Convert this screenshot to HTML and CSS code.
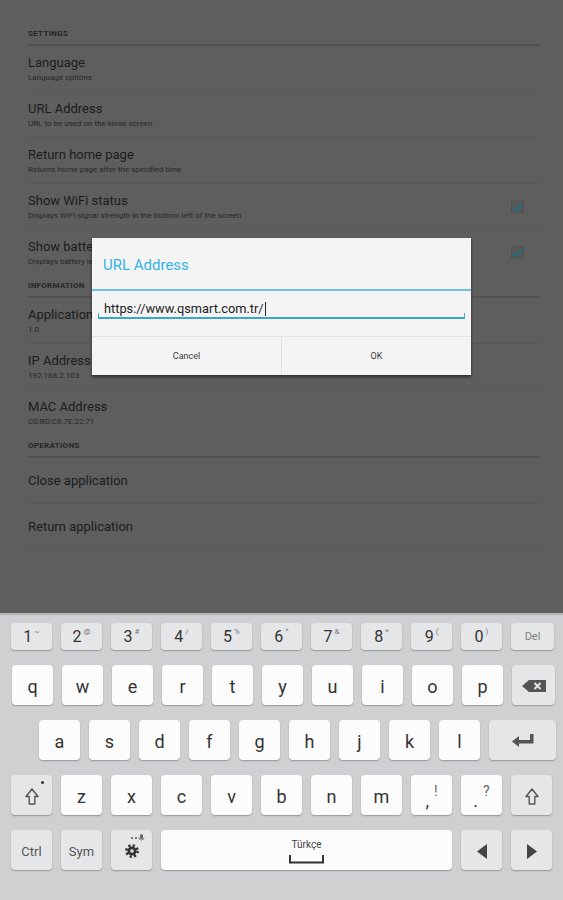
FILE: index.html
```html
<!DOCTYPE html>
<html lang="en">
<head>
  <meta charset="UTF-8">
  <meta name="viewport" content="width=device-width, initial-scale=1.0">
  <title>Kiosk Settings - URL Address</title>
  <link rel="stylesheet" href="styles.css">
</head>
<body>
<div class="screen">

  <div class="settings">
    <div class="group-title">SETTINGS</div>
    <div class="pref">
      <div class="pref-text"><div class="pref-title">Language</div><div class="pref-sub">Language options</div></div>
    </div>
    <div class="pref">
      <div class="pref-text"><div class="pref-title">URL Address</div><div class="pref-sub">URL to be used on the kiosk screen</div></div>
    </div>
    <div class="pref">
      <div class="pref-text"><div class="pref-title">Return home page</div><div class="pref-sub">Returns home page after the specified time</div></div>
    </div>
    <div class="pref">
      <div class="pref-text"><div class="pref-title">Show WiFi status</div><div class="pref-sub">Displays WiFi signal strength in the bottom left of the screen</div></div>
      <span class="check"><svg width="12" height="10" viewBox="0 0 12 10"><path d="M1 5.5l3.2 3L11 1.5" fill="none" stroke="#1d6e86" stroke-width="2.2"/></svg></span>
    </div>
    <div class="pref last">
      <div class="pref-text"><div class="pref-title">Show battery status</div><div class="pref-sub">Displays battery level in the bottom left of the screen</div></div>
      <span class="check"><svg width="12" height="10" viewBox="0 0 12 10"><path d="M1 5.5l3.2 3L11 1.5" fill="none" stroke="#1d6e86" stroke-width="2.2"/></svg></span>
    </div>

    <div class="group-title">INFORMATION</div>
    <div class="pref">
      <div class="pref-text"><div class="pref-title">Application version</div><div class="pref-sub">1.0</div></div>
    </div>
    <div class="pref">
      <div class="pref-text"><div class="pref-title">IP Address</div><div class="pref-sub">192.168.2.103</div></div>
    </div>
    <div class="pref last">
      <div class="pref-text"><div class="pref-title">MAC Address</div><div class="pref-sub">C0:BD:C8:7E:22:71</div></div>
    </div>

    <div class="group-title">OPERATIONS</div>
    <div class="pref">
      <div class="pref-text"><div class="pref-title">Close application</div></div>
    </div>
    <div class="pref">
      <div class="pref-text"><div class="pref-title">Return application</div></div>
    </div>
  </div>

  <div class="dialog">
    <div class="dialog-title">URL Address</div>
    <div class="dialog-body">
      <div class="edit">https://www.qsmart.com.tr/<span class="cursor"></span></div>
    </div>
    <div class="dialog-buttons">
      <div class="dbtn">Cancel</div>
      <div class="dbtn">OK</div>
    </div>
  </div>

  <div class="keyboard">
    <div class="kb-row num-row">
      <div class="key fn">1<sup>~</sup></div>
      <div class="key fn">2<sup>@</sup></div>
      <div class="key fn">3<sup>#</sup></div>
      <div class="key fn">4<sup>/</sup></div>
      <div class="key fn">5<sup>%</sup></div>
      <div class="key fn">6<sup>^</sup></div>
      <div class="key fn">7<sup>&amp;</sup></div>
      <div class="key fn">8<sup>*</sup></div>
      <div class="key fn">9<sup>(</sup></div>
      <div class="key fn">0<sup>)</sup></div>
      <div class="key fn small-label wide">Del</div>
    </div>
    <div class="kb-row row-q">
      <div class="key">q</div><div class="key">w</div><div class="key">e</div><div class="key">r</div><div class="key">t</div>
      <div class="key">y</div><div class="key">u</div><div class="key">i</div><div class="key">o</div><div class="key">p</div>
      <div class="key fn wide">
        <svg width="24" height="12" viewBox="0 0 24 12"><path d="M7 0h17v12H7L0 6z" fill="#555"/><path d="M12.5 3l6 6M18.5 3l-6 6" stroke="#e5e6e8" stroke-width="2"/></svg>
      </div>
    </div>
    <div class="kb-row row-a">
      <div class="key">a</div><div class="key">s</div><div class="key">d</div><div class="key">f</div><div class="key">g</div>
      <div class="key">h</div><div class="key">j</div><div class="key">k</div><div class="key">l</div>
      <div class="key fn enter">
        <svg width="22" height="14" viewBox="0 0 22 14"><path d="M18 0h3.5v9.5H7v3.5L0 7.5 7 2v4h11z" fill="#555"/></svg>
      </div>
    </div>
    <div class="kb-row">
      <div class="key fn shift">
        <svg width="14" height="17" viewBox="0 0 14 17"><path d="M7 1l6 7.5H9.8V16H4.2V8.5H1z" fill="none" stroke="#555" stroke-width="1.4" stroke-linejoin="round"/></svg>
        <span class="lock-dot"></span>
      </div>
      <div class="key">z</div><div class="key">x</div><div class="key">c</div><div class="key">v</div><div class="key">b</div>
      <div class="key">n</div><div class="key">m</div>
      <div class="key punct"><span class="mark">,</span><sup>!</sup></div>
      <div class="key punct"><span class="mark">.</span><sup>?</sup></div>
      <div class="key fn">
        <svg width="14" height="17" viewBox="0 0 14 17"><path d="M7 1l6 7.5H9.8V16H4.2V8.5H1z" fill="none" stroke="#555" stroke-width="1.4" stroke-linejoin="round"/></svg>
      </div>
    </div>
    <div class="kb-row">
      <div class="key fn label">Ctrl</div>
      <div class="key fn label">Sym</div>
      <div class="key fn gear">
        <svg width="16" height="16" viewBox="0 0 16 16">
          <circle cx="8" cy="8" r="5.6" fill="none" stroke="#333" stroke-width="2.6" stroke-dasharray="2.2 2.2"/>
          <circle cx="8" cy="8" r="4.6" fill="#333"/>
          <circle cx="8" cy="8" r="1.8" fill="#e5e6e8"/>
        </svg>
        <span class="gear-dots">
          <svg width="16" height="8" viewBox="0 0 16 8"><circle cx="2" cy="5" r="1" fill="#555"/><circle cx="6" cy="5" r="1" fill="#555"/><rect x="10" y="1" width="3" height="5" rx="1.5" fill="#666"/><path d="M9 4.5a2.5 2.5 0 0 0 5 0" fill="none" stroke="#666" stroke-width=".8"/></svg>
        </span>
      </div>
      <div class="key space">
        <span class="lang">Türkçe</span>
        <svg width="35" height="9" viewBox="0 0 35 9"><path d="M1 0v7.5h33V0" fill="none" stroke="#333" stroke-width="2"/></svg>
      </div>
      <div class="key fn">
        <svg width="10" height="15" viewBox="0 0 10 15"><path d="M10 0v15L0 7.5z" fill="#444"/></svg>
      </div>
      <div class="key fn">
        <svg width="10" height="15" viewBox="0 0 10 15"><path d="M0 0v15l10-7.5z" fill="#444"/></svg>
      </div>
    </div>
  </div>

</div>
</body>
</html>
```

FILE: styles.css
```css
* {
  box-sizing: border-box;
}
body {
  margin: 0;
  font-family: Roboto, "Liberation Sans", sans-serif;
  background: #5e5e5e;
}
.screen {
  position: relative;
  width: 563px;
  height: 900px;
  overflow: hidden;
}

/* settings list, dimmed behind the dialog */
.settings {
  height: 613px;
  background: #5e5e5e;
  padding: 24px 23px 0 27px;
}
.group-title {
  height: 22px;
  line-height: 20px;
  padding-left: 1px;
  font-size: 8px;
  font-weight: bold;
  letter-spacing: 0.3px;
  color: #262626;
  border-bottom: 2px solid #515151;
}
.pref {
  display: flex;
  align-items: center;
  justify-content: space-between;
  height: 46px;
  padding-left: 1px;
  border-bottom: 1px solid #585858;
}
.pref.last {
  border-bottom-color: transparent;
}
.pref-title {
  font-size: 13px;
  line-height: 16px;
  color: #1c1c1c;
}
.pref-sub {
  margin-top: 2px;
  font-size: 8px;
  line-height: 10px;
  color: #272727;
}
.check {
  display: flex;
  align-items: center;
  justify-content: center;
  width: 13px;
  height: 13px;
  margin-right: 16px;
  background: #575757;
  border: 1px solid #535353;
}

/* dialog */
.dialog {
  position: absolute;
  left: 92px;
  top: 238px;
  width: 379px;
  height: 137px;
  background: #f4f4f4;
  box-shadow: 0 2px 3px rgba(0, 0, 0, 0.55);
}
.dialog-title {
  height: 53px;
  padding: 17px 0 0 11px;
  font-size: 15px;
  line-height: 20px;
  color: #33b5e5;
  border-bottom: 2px solid #6cc3e6;
}
.dialog-body {
  height: 45px;
  padding: 8px 6px 0 6px;
}
.edit {
  position: relative;
  height: 20px;
  padding-left: 6px;
  font-size: 12.8px;
  line-height: 20px;
  color: #222;
  border-bottom: 2px solid #3aa5cf;
}
.edit::before,
.edit::after {
  content: "";
  position: absolute;
  bottom: 0;
  width: 1px;
  height: 4px;
  background: #3aa5cf;
}
.edit::before {
  left: 0;
}
.edit::after {
  right: 0;
}
.cursor {
  display: inline-block;
  width: 1px;
  height: 14px;
  margin-left: 1px;
  vertical-align: -3px;
  background: #222;
}
.dialog-buttons {
  display: flex;
  height: 39px;
  border-top: 1px solid #e2e2e2;
}
.dbtn {
  flex: 1;
  display: flex;
  align-items: center;
  justify-content: center;
  font-size: 9px;
  color: #3a3a3a;
}
.dbtn + .dbtn {
  border-left: 1px solid #e2e2e2;
}

/* keyboard */
.keyboard {
  height: 287px;
  background: #cfd0d2;
  border-top: 2px solid #b4b5b7;
  padding-top: 8px;
}
.kb-row {
  display: flex;
  gap: 9px;
  padding-left: 11px;
  margin-bottom: 15px;
}
.row-q {
  padding-left: 12px;
}
.row-a {
  padding-left: 39px;
}
.key {
  position: relative;
  display: flex;
  align-items: center;
  justify-content: center;
  width: 41px;
  height: 40px;
  padding-top: 2px;
  border-radius: 4px;
  background: #fcfcfc;
  box-shadow: 0 1px 1.5px rgba(0, 0, 0, 0.28);
  font-size: 18px;
  color: #333;
}
.key.fn {
  background: #e5e6e8;
}
.num-row .key {
  height: 27px;
  padding-top: 0;
  font-size: 16px;
}
.key sup {
  align-self: flex-start;
  margin-top: 4px;
  margin-left: 2px;
  font-size: 8px;
  color: #777;
}
.key.wide {
  width: 43px;
}
.small-label {
  font-size: 11px !important;
  color: #808080;
}
.enter {
  width: 67px;
}
.lock-dot {
  position: absolute;
  top: 6px;
  right: 8px;
  width: 3px;
  height: 3px;
  border-radius: 50%;
  background: #333;
}
.punct .mark {
  margin-top: 8px;
  font-size: 18px;
}
.punct sup {
  margin-top: 6px;
  margin-left: 5px;
  font-size: 14px;
  color: #666;
}
.label {
  font-size: 13px;
  color: #555;
}
.gear-dots {
  position: absolute;
  top: 3px;
  right: 6px;
  line-height: 0;
}
.space {
  flex-direction: column;
  justify-content: flex-start;
  width: 291px;
  padding-top: 9px;
}
.lang {
  font-size: 10px;
  line-height: 12px;
  color: #444;
  margin-bottom: 4px;
}
```
